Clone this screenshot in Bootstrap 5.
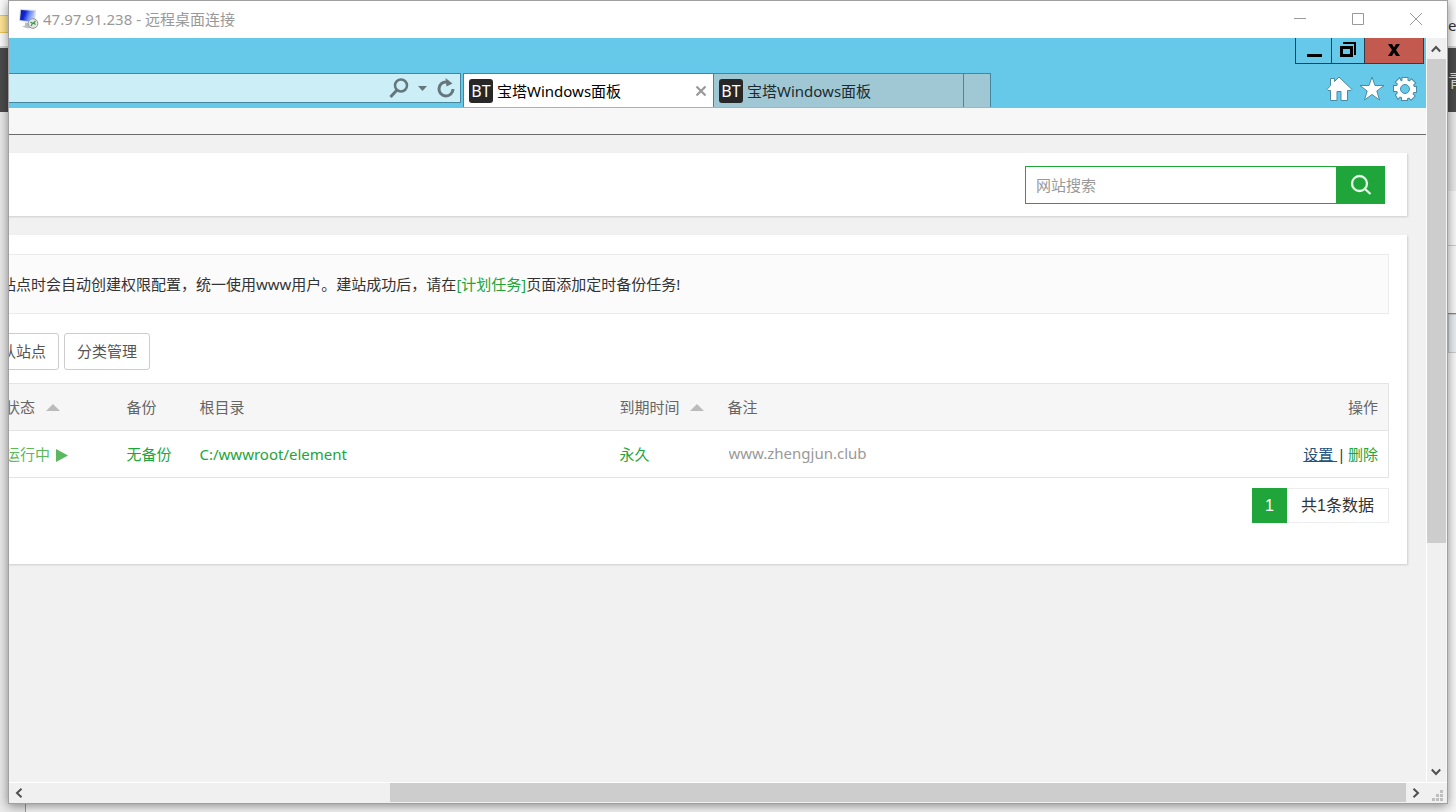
<!DOCTYPE html>
<html lang="zh-CN">
<head>
<meta charset="utf-8">
<meta name="viewport" content="width=device-width, initial-scale=1">
<title>47.97.91.238 - 远程桌面连接</title>
<link href="https://cdn.jsdelivr.net/npm/bootstrap@5.3.0/dist/css/bootstrap.min.css" rel="stylesheet">
<script src="https://cdn.jsdelivr.net/npm/bootstrap@5.3.0/dist/js/bootstrap.bundle.min.js"></script>
<style>
  :root { --bt-green: #20a53a; --ie-blue: #66c9ea; --ie-edge: #45869c; }
  body { font: 15px/20px "Noto Sans", "Noto Sans CJK SC", sans-serif; color: #333; background: #f8f8f8; overflow: hidden; }
  button { font-family: inherit; }
  svg { display: block; flex: none; }

  /* desktop behind the window */
  .desk { display: grid; grid-template: 1fr 8px / 8px 1fr 8px; height: 100vh; }
  .strip { overflow: hidden; min-width: 0; white-space: nowrap; }
  .strip > div { flex: none; }
  .h-tab { height: 15px; background: #fafafa; }
  .h-yellow { height: 18px; background: #ffe594; border: solid #e8c65c; border-width: 1px 0; }
  .h-white { height: 13px; background: #fafafa; }
  .h-line { height: 2px; background: #d5d5d8; }
  .h-dark { height: 64px; background: #4b4b4b; color: #ddd; font-size: 18px; line-height: 64px; }
  .h-top { height: 46px; background: #fafafa; line-height: 50px; color: #333; }
  .h-gray { height: 79px; background: #e9e9e9; }
  .h-panel { height: 55px; border-bottom: 1px solid #ccc; }
  .h-panel2 { height: 68px; border-bottom: 1px solid #888; }
  .h-box { height: 39px; background: #e9eef2; border: solid #ccc; border-width: 1px 0 1px 1px; }
  .desk-foot { grid-column: 1 / -1; background: #f6f6f6; }
  .desk-foot i { width: 26px; background: #eaeaea; border-right: 1px solid #999; }

  .rdp { border: 1px solid #a0a0a0; box-shadow: 0 2px 10px rgba(0,0,0,.45); z-index: 1; min-width: 0; min-height: 0; background: #f0f0f0; }
  .rdp-title { height: 37px; background: #fff; color: #999; padding: 0 2px 2px 10px; flex: none; }
  .rdp-title button { width: 58px; height: 35px; }
  .flat { border: 0; background: none; padding: 0; display: flex; align-items: center; justify-content: center; color: inherit; }

  .session { background: #f1f1f1; min-width: 0; overflow: hidden; border-right: 1px solid #fff; }
  .vbar, .hbar { background: #f0f0f0; flex: none; }
  .vbar { width: 20px; border-right: 1px solid #f6f6f6; }
  .vbar button { height: 21px; width: 18px; }
  .hbar { height: 21px; border-top: 1px solid #fff; }
  .hbar button { width: 20px; height: 19px; }
  .hbar .track { padding-bottom: 1px; }
  .thumb { background: #cdcdcd; }
  .corner { width: 21px; }

  /* browser chrome */
  .ie { background: var(--ie-blue); flex: none; }
  .caps { height: 35px; padding-right: 2px; }
  .caps button { height: 26px; border: 1px solid #2b3d45; border-top: 0; padding-bottom: 2px; color: #000; }
  .caps button + button { border-left: 0; }
  .cap-min { width: 37px; } .cap-max { width: 33px; } .cap-x { width: 59px; background: #c35a50; }
  .bar { height: 35px; }
  .addr { width: 452px; height: 30px; border: 1px solid var(--ie-edge); border-left: 0; background: #cbeef7; margin-right: 2px; padding-right: 4px; gap: 5px; color: #65777c; }
  .ie-tab { height: 34px; width: 250px; padding: 0 5px; border-top: 1px solid var(--ie-edge); border-right: 1px solid var(--ie-edge); background: #a0c7d4; color: #1c2b30; flex: none; gap: 4px; }
  .ie-tab.active { width: 251px; background: #fff; color: #000; border-left: 1px solid var(--ie-edge); }
  .ie-tab.blank { width: 27px; }
  .bt { width: 24px; height: 24px; border-radius: 3px; background: #272727; color: #fff; font-size: 16px; line-height: 24px; text-align: center; flex: none; }
  .tools { gap: 6px; padding-right: 8px; height: 32px; }
  .menu-row { height: 27px; background: #f7f7f7; border-bottom: 1px solid #6b6b6b; flex: none; }

  /* panel page, scrolled sideways */
  .page { margin: 18px 19px 0 -40px; }
  .sheet { background: #fff; box-shadow: 1px 1px 2px rgba(0,0,0,.15); }
  .finder { padding: 13px 22px 12px; margin-bottom: 19px; }
  .finder input { width: 311px; height: 38px; border: 1px solid var(--bt-green); border-right: 0; padding: 0 10px; color: #555; outline: 0; }
  .finder input::placeholder { color: #999; }
  .finder button { width: 49px; height: 38px; background: var(--bt-green); }
  .sites { padding: 19px 18px 41px 0; }
  .tip { border: 1px solid #ececec; background: #fbfbfb; padding: 19px 31px; height: 60px; white-space: nowrap; }
  .page a { color: var(--bt-green); text-decoration: none; }
  .acts { padding: 19px 0 13px 4px; gap: 5px; }
  .acts button { height: 37px; padding: 0 12px 2px; font-size: 15px; line-height: 20px; border: 1px solid #ccc; border-radius: 3px; background: #fff; color: #555; }
  .grid-t { table-layout: fixed; width: 100%; border: 1px solid #e4e4e4; margin-bottom: 10px; border-collapse: collapse; }
  .grid-t th, .grid-t td { height: 47px; padding: 0 10px; white-space: nowrap; border-bottom: 1px solid #e4e4e4; vertical-align: middle; }
  .grid-t th { font-weight: 400; color: #666; background: #f6f6f6; }
  .grid-t th:first-child, .grid-t td:first-child { padding-left: 35px; }
  .grid-t th svg { display: inline-block; vertical-align: 2px; margin-left: 7px; }
  .grid-t td:first-child svg { display: inline-block; vertical-align: -2px; }
  .grid-t td:first-child a { color: #5cb85c; }
  .grid-t .memo { color: #999; border: 0; background: none; padding: 0 0 2px 1px; width: 100%; outline: 0; }
  .grid-t a.hot { color: #23527c; text-decoration: underline; white-space: pre; }
  .c-state { width: 147px; } .c-bak { width: 73px; } .c-root { width: 420px; } .c-exp { width: 108px; } .c-op { width: 120px; }
  .pager { font: 16px/36px "Liberation Sans", "Noto Sans CJK SC", sans-serif; }
  .pager .now { width: 35px; height: 35px; background: var(--bt-green); color: #fff; text-align: center; }
  .pager .sum { height: 35px; line-height: 34px; width: 102px; text-align: center; border: 1px solid #ececec; border-left: 0; }
</style>
</head>
<body>
<div class="desk">
  <div class="strip d-flex flex-column" style="background:#e9e9e9">
    <div class="h-tab"></div><div class="h-yellow"></div><div class="h-white"></div><div class="h-line"></div><div class="h-dark"></div>
  </div>

  <main class="rdp d-flex flex-column">
    <header class="rdp-title d-flex align-items-center">
      <svg width="20" height="20" viewBox="0 0 20 20">
        <defs><linearGradient id="scr" x1="0" y1="0" x2="1" y2=".3"><stop offset="0" stop-color="#0a1b90"/><stop offset=".4" stop-color="#1226d6"/><stop offset=".65" stop-color="#5b7cf0"/><stop offset="1" stop-color="#b9c9ff"/></linearGradient></defs>
        <path d="M1 0l16 1-1 13-16-2z" fill="#d5d9e4"/>
        <path d="M2 1l13.500 1-1 11L1 11z" fill="url(#scr)"/>
        <path d="M6 13.500l4 .5v3l3 1.500-4 1-6-2 3-1z" fill="#b9bdc6"/>
        <circle cx="14" cy="14.500" r="4.800" fill="#e4e8e4" stroke="#8f9691"/>
        <path d="M11.500 13l2 1.500-1.500 2.500M16.500 12l-2 2 2 1.500" fill="none" stroke="#3d9a4c" stroke-width="1.300"/>
      </svg>
      <span class="ms-1 me-auto">47.97.91.238 - 远程桌面连接</span>
      <button class="flat" aria-label="最小化"><svg width="12" height="12" viewBox="0 0 12 12" stroke="#999"><path d="M0 5.500h12"/></svg></button>
      <button class="flat" aria-label="最大化"><svg width="12" height="12" viewBox="0 0 12 12" stroke="#999" fill="none"><path d="M.5.500h11v11H.5z"/></svg></button>
      <button class="flat" aria-label="关闭"><svg width="12" height="12" viewBox="0 0 12 12" stroke="#999"><path d="M0 0l12 12M12 0L0 12"/></svg></button>
    </header>

    <div class="d-flex flex-fill" style="min-height:0">
      <section class="session flex-fill d-flex flex-column">
        <div class="ie">
          <div class="caps d-flex justify-content-end">
            <button class="flat cap-min" aria-label="最小化"><svg width="16" height="16" viewBox="0 0 16 16"><path d="M1 12h15v3H1z"/></svg></button>
            <button class="flat cap-max" aria-label="还原"><svg width="16" height="16" viewBox="0 0 16 16"><path d="M0 4h13v11H0zM3 7v5h7V7zM3 0h13v13h-2V2H3z" fill-rule="evenodd"/></svg></button>
            <button class="flat cap-x" aria-label="关闭"><svg width="14" height="12" viewBox="0 0 14 12"><path d="M1 0h4l2 3.500L9 0h4L9 6l4 6H9L7 8.500 5 12H1l4-6z"/></svg></button>
          </div>
          <div class="bar d-flex align-items-start">
            <div class="addr d-flex align-items-center justify-content-end">
              <button class="flat" aria-label="搜索"><svg width="20" height="20" viewBox="0 0 20 20" fill="none" stroke="currentColor" stroke-width="2.500"><circle cx="12" cy="7.500" r="6"/><path d="M8 12l-6.500 7" stroke-width="3"/></svg></button>
              <button class="flat" aria-label="下拉"><svg width="17" height="8" viewBox="0 0 17 8" fill="currentColor"><path d="M4 2h9L8.500 7z"/></svg></button>
              <button class="flat" aria-label="刷新"><svg width="20" height="20" viewBox="0 0 20 20"><path d="M10.500 4A7 7 0 1 0 17 11" fill="none" stroke="currentColor" stroke-width="3"/><path d="M9.500 0l7 5.500-6 3z" fill="currentColor"/></svg></button>
            </div>
            <div class="ie-tab active d-flex align-items-center">
              <span class="bt">BT</span><span>宝塔Windows面板</span>
              <button class="flat ms-auto" aria-label="关闭标签"><svg width="14" height="14" viewBox="0 0 14 14" stroke="#999" stroke-width="2.200"><path d="M2.500 2.500l9 9M11.500 2.500l-9 9"/></svg></button>
            </div>
            <div class="ie-tab d-flex align-items-center"><span class="bt">BT</span><span>宝塔Windows面板</span></div>
            <button class="flat ie-tab blank" aria-label="新标签"></button>
            <div class="tools d-flex align-items-center ms-auto">
              <button class="flat" aria-label="主页"><svg width="27" height="26" viewBox="0 0 27 26"><path d="M13 1L8.500 5.500V2.500H4.500v7L1 13.500l1 1h2.500V24.500h6.500v-9h4v9h6.500V14.500H25l1-1z" fill="#fff" stroke="#4a8ba3" stroke-linejoin="round"/></svg></button>
              <button class="flat" aria-label="收藏"><svg width="27" height="26" viewBox="0 0 27 26"><path d="M13 1l3 8.500h9l-7.200 5.500 2.700 9-7.500-5.500-7.500 5.500 2.700-9L1 9.500h9z" fill="#fff" stroke="#4a8ba3" stroke-linejoin="round"/></svg></button>
              <button class="flat" aria-label="工具"><svg width="26" height="26" viewBox="0 0 26 26">
                <path d="M10.500 4.500V2h5v2.500l2 1 2-2 3.500 3.500-2 2 1 2H24v5h-2.500l-1 2 2 2-3.500 3.500-2-2-2 1V24h-5v-2.500l-2-1-2 2L4 19l2-2-1-2H2v-5h3l1-2-2-2L7.500 2.500l1.500 3z" fill="#fff" stroke="#4a8ba3" stroke-width="2" paint-order="stroke"/>
                <circle cx="13" cy="13" r="4.500" fill="#66c9ea" stroke="#4a8ba3"/></svg></button>
            </div>
          </div>
        </div>
        <div class="menu-row"></div>

        <div class="page">
          <form class="sheet finder d-flex justify-content-end">
            <input type="text" placeholder="网站搜索" aria-label="网站搜索">
            <button type="button" class="flat" aria-label="搜索"><svg width="22" height="22" viewBox="0 0 22 22" fill="none" stroke="#e9f6eb" stroke-width="2.300"><circle cx="9.500" cy="9.500" r="7.500"/><path d="M15 15l5.500 5"/></svg></button>
          </form>

          <section class="sheet sites">
            <div class="tip">站点时会自动创建权限配置，统一使用www用户。建站成功后，请在<a href="#">[计划任务]</a>页面添加定时备份任务!</div>
            <div class="acts d-flex">
              <button type="button">默认站点</button>
              <button type="button">分类管理</button>
            </div>
            <table class="grid-t">
              <colgroup><col class="c-state"><col class="c-bak"><col class="c-root"><col class="c-exp"><col><col class="c-op"></colgroup>
              <thead><tr>
                <th>状态 <svg width="14" height="7" viewBox="0 0 14 7"><path d="M0 7l7-7 7 7z" fill="#bbb"/></svg></th>
                <th>备份</th><th>根目录</th>
                <th>到期时间 <svg width="14" height="7" viewBox="0 0 14 7"><path d="M0 7l7-7 7 7z" fill="#bbb"/></svg></th>
                <th>备注</th><th class="text-end">操作</th>
              </tr></thead>
              <tbody><tr>
                <td><a href="#">运行中 <svg width="14" height="13" viewBox="0 0 14 13"><path d="M2 0l12 6.500L2 13z" fill="#5cb85c"/></svg></a></td>
                <td><a href="#">无备份</a></td>
                <td><a href="#">C:/wwwroot/element</a></td>
                <td><a href="#">永久</a></td>
                <td><input class="memo" type="text" value="www.zhengjun.club" aria-label="备注"></td>
                <td class="text-end"><a class="hot" href="#">设置 </a>|&thinsp;<a href="#">删除</a></td>
              </tr></tbody>
            </table>
            <div class="pager d-flex justify-content-end"><span class="now">1</span><span class="sum">共1条数据</span></div>
          </section>
        </div>
      </section>

      <div class="vbar d-flex flex-column">
        <button class="flat" aria-label="向上滚动"><svg width="10" height="8" viewBox="0 0 10 8" fill="none" stroke="#505050" stroke-width="2"><path d="M.8 6.500L5 2l4.200 4.500"/></svg></button>
        <div class="flex-fill"><div class="thumb" style="height:69%"></div></div>
        <button class="flat" aria-label="向下滚动"><svg width="10" height="8" viewBox="0 0 10 8" fill="none" stroke="#505050" stroke-width="2"><path d="M.8 1.500L5 6l4.200-4.500"/></svg></button>
      </div>
    </div>

    <div class="hbar d-flex">
      <button class="flat" aria-label="向左滚动"><svg width="8" height="10" viewBox="0 0 8 10" fill="none" stroke="#505050" stroke-width="2"><path d="M6.500.8L2 5l4.500 4.200"/></svg></button>
      <div class="track flex-fill d-flex justify-content-end"><div class="thumb" style="width:73.800%"></div></div>
      <button class="flat" aria-label="向右滚动"><svg width="8" height="10" viewBox="0 0 8 10" fill="none" stroke="#505050" stroke-width="2"><path d="M1.500.8L6 5 1.500 9.200"/></svg></button>
      <div class="corner d-flex align-items-end justify-content-end"><svg class="me-1" width="11" height="13" viewBox="0 0 11 13" fill="#bfbfbf"><path d="M8 0h3v3H8zM4 4h3v3H4zM8 4h3v3H8zM0 8h3v3H0zM4 8h3v3H4zM8 8h3v3H8z"/></svg></div>
    </div>
  </main>

  <div class="strip d-flex flex-column">
    <div class="h-top">e</div><div class="h-line"></div><div class="h-dark">青</div><div class="h-gray"></div><div class="h-panel"></div><div class="h-panel2"></div><div class="h-box"></div>
  </div>
  <div class="desk-foot d-flex"><i></i></div>
</div>
</body>
</html>
